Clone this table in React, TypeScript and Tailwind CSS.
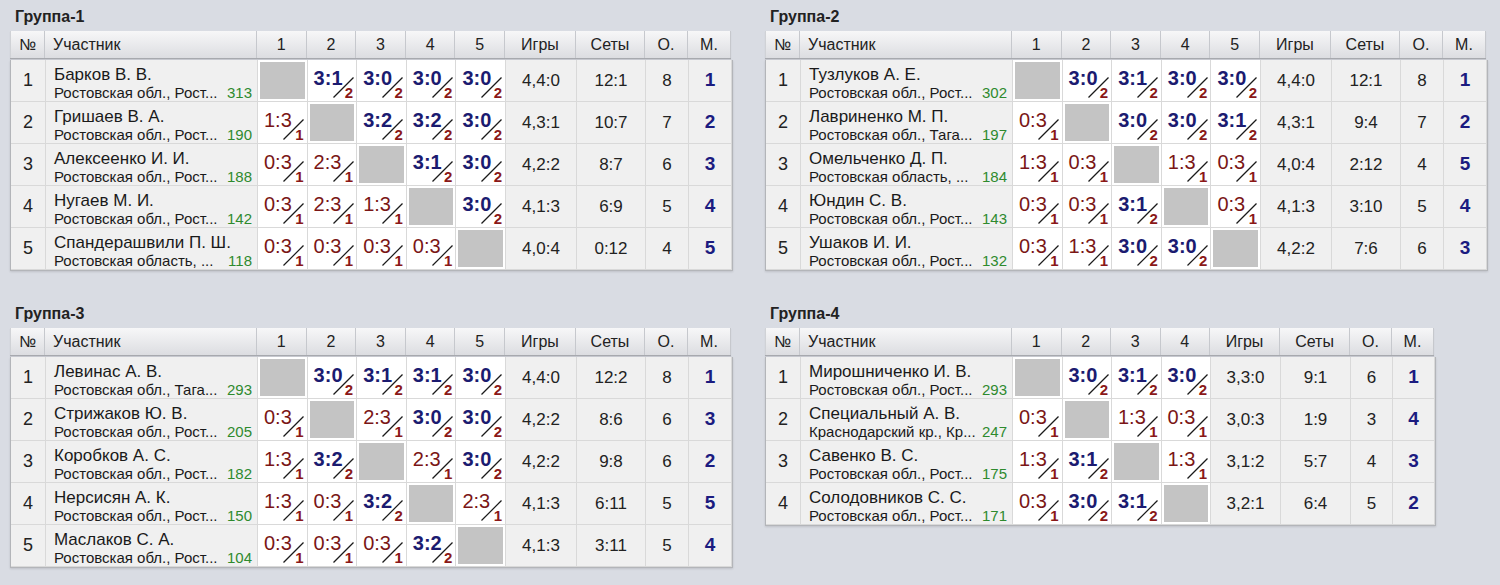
import React from "react";

type Row = {
  name: string;
  region: string;
  rating: number;
  scores: (string | null)[];
  games: string;
  sets: string;
  points: number;
  place: number;
};

type Group = {
  title: string;
  rows: Row[];
};

const groups: Group[] = [
  {
    title: "Группа-1",
    rows: [
      { name: "Барков В. В.", region: "Ростовская обл., Рост...", rating: 313, scores: [null, "3:1", "3:0", "3:0", "3:0"], games: "4,4:0", sets: "12:1", points: 8, place: 1 },
      { name: "Гришаев В. А.", region: "Ростовская обл., Рост...", rating: 190, scores: ["1:3", null, "3:2", "3:2", "3:0"], games: "4,3:1", sets: "10:7", points: 7, place: 2 },
      { name: "Алексеенко И. И.", region: "Ростовская обл., Рост...", rating: 188, scores: ["0:3", "2:3", null, "3:1", "3:0"], games: "4,2:2", sets: "8:7", points: 6, place: 3 },
      { name: "Нугаев М. И.", region: "Ростовская обл., Рост...", rating: 142, scores: ["0:3", "2:3", "1:3", null, "3:0"], games: "4,1:3", sets: "6:9", points: 5, place: 4 },
      { name: "Спандерашвили П. Ш.", region: "Ростовская область, ...", rating: 118, scores: ["0:3", "0:3", "0:3", "0:3", null], games: "4,0:4", sets: "0:12", points: 4, place: 5 },
    ],
  },
  {
    title: "Группа-2",
    rows: [
      { name: "Тузлуков А. Е.", region: "Ростовская обл., Рост...", rating: 302, scores: [null, "3:0", "3:1", "3:0", "3:0"], games: "4,4:0", sets: "12:1", points: 8, place: 1 },
      { name: "Лавриненко М. П.", region: "Ростовская обл., Тага...", rating: 197, scores: ["0:3", null, "3:0", "3:0", "3:1"], games: "4,3:1", sets: "9:4", points: 7, place: 2 },
      { name: "Омельченко Д. П.", region: "Ростовская область, ...", rating: 184, scores: ["1:3", "0:3", null, "1:3", "0:3"], games: "4,0:4", sets: "2:12", points: 4, place: 5 },
      { name: "Юндин С. В.", region: "Ростовская обл., Рост...", rating: 143, scores: ["0:3", "0:3", "3:1", null, "0:3"], games: "4,1:3", sets: "3:10", points: 5, place: 4 },
      { name: "Ушаков И. И.", region: "Ростовская обл., Рост...", rating: 132, scores: ["0:3", "1:3", "3:0", "3:0", null], games: "4,2:2", sets: "7:6", points: 6, place: 3 },
    ],
  },
  {
    title: "Группа-3",
    rows: [
      { name: "Левинас А. В.", region: "Ростовская обл., Тага...", rating: 293, scores: [null, "3:0", "3:1", "3:1", "3:0"], games: "4,4:0", sets: "12:2", points: 8, place: 1 },
      { name: "Стрижаков Ю. В.", region: "Ростовская обл., Рост...", rating: 205, scores: ["0:3", null, "2:3", "3:0", "3:0"], games: "4,2:2", sets: "8:6", points: 6, place: 3 },
      { name: "Коробков А. С.", region: "Ростовская обл., Рост...", rating: 182, scores: ["1:3", "3:2", null, "2:3", "3:0"], games: "4,2:2", sets: "9:8", points: 6, place: 2 },
      { name: "Нерсисян А. К.", region: "Ростовская обл., Рост...", rating: 150, scores: ["1:3", "0:3", "3:2", null, "2:3"], games: "4,1:3", sets: "6:11", points: 5, place: 5 },
      { name: "Маслаков С. А.", region: "Ростовская обл., Рост...", rating: 104, scores: ["0:3", "0:3", "0:3", "3:2", null], games: "4,1:3", sets: "3:11", points: 5, place: 4 },
    ],
  },
  {
    title: "Группа-4",
    rows: [
      { name: "Мирошниченко И. В.", region: "Ростовская обл., Рост...", rating: 293, scores: [null, "3:0", "3:1", "3:0"], games: "3,3:0", sets: "9:1", points: 6, place: 1 },
      { name: "Специальный А. В.", region: "Краснодарский кр., Кр...", rating: 247, scores: ["0:3", null, "1:3", "0:3"], games: "3,0:3", sets: "1:9", points: 3, place: 4 },
      { name: "Савенко В. С.", region: "Ростовская обл., Рост...", rating: 175, scores: ["1:3", "3:1", null, "1:3"], games: "3,1:2", sets: "5:7", points: 4, place: 3 },
      { name: "Солодовников С. С.", region: "Ростовская обл., Рост...", rating: 171, scores: ["0:3", "3:0", "3:1", null], games: "3,2:1", sets: "6:4", points: 5, place: 2 },
    ],
  },
];

const cols5 = "grid grid-cols-[35px_212px_repeat(5,49.6px)_71px_69px_43px_43px]";
const cols4 = "grid grid-cols-[35px_212px_repeat(4,49.5px)_70px_70px_42px_42px]";

const head =
  "h-[27px] flex items-center justify-center border-r border-[#c6c8cd] bg-gradient-to-b from-[#f7f7f8] to-[#dcdde1] text-[16px] text-[#222]";
const cell = "h-[42px] flex items-center justify-center border-r border-b border-[#d9d9d9]";

function ScoreCell({ score }: { score: string | null }) {
  if (!score) {
    return (
      <div className="h-[42px] bg-white p-[2px] border-r border-b border-[#d9d9d9]">
        <div className="h-full bg-[#c4c4c4]" />
      </div>
    );
  }
  const [a, b] = score.split(":").map(Number);
  const win = a > b;
  return (
    <div className="relative h-[42px] bg-white border-r border-b border-[#d9d9d9]">
      <span
        className={
          win
            ? "absolute left-[6px] top-[8px] text-[20px] leading-[20px] font-bold text-[#1b1b70]"
            : "absolute left-[6px] top-[8px] text-[20px] leading-[20px] text-[#7a1616]"
        }
      >
        {score}
      </span>
      <svg className="absolute left-[25px] top-[17px]" width="21" height="21" viewBox="0 0 21 21">
        <line x1="0.5" y1="20.5" x2="20.5" y2="0.5" stroke="#1a1a1a" strokeWidth="1.2" />
      </svg>
      <span className="absolute right-[3px] top-[25px] text-[15px] leading-[15px] font-bold text-[#8a1818]">
        {win ? 2 : 1}
      </span>
    </div>
  );
}

function GroupTable({ group }: { group: Group }) {
  const n = group.rows.length;
  const cols = n === 5 ? cols5 : cols4;
  return (
    <div>
      <div className="h-[31px] pl-[5px] pt-[8px] text-[16px] leading-[18px] font-bold text-[#222]">{group.title}</div>
      <div className={`${cols} w-fit border-b border-[#a7a9ae] shadow-[0_1px_1px_rgba(0,0,0,0.08)]`}>
        <div className={`${head} border-l border-l-[#d0d2d6]`}>№</div>
        <div className={`${head} justify-start pl-2`}>Участник</div>
        {group.rows.map((_, i) => (
          <div key={i} className={head}>
            {i + 1}
          </div>
        ))}
        <div className={head}>Игры</div>
        <div className={head}>Сеты</div>
        <div className={head}>О.</div>
        <div className={head}>М.</div>
      </div>
      <div className="border-l border-r border-b border-[#b3b5b9] mt-[1px] w-fit bg-[#f0f0f0] shadow-[0_1px_2px_rgba(0,0,0,0.12)]">
        {group.rows.map((r, i) => (
          <div key={i} className={cols}>
            <div className={`${cell} text-[18px] text-[#222]`}>{i + 1}</div>
            <div className="h-[42px] border-r border-b border-[#d9d9d9] pl-2 pr-[5px] pt-[5px]">
              <div className="text-[17px] leading-[19px] text-[#1a1a1a] whitespace-nowrap">{r.name}</div>
              <div className="flex justify-between items-baseline text-[15px] leading-[17px] whitespace-nowrap">
                <span className="text-[#1a1a1a]">{r.region}</span>
                <span className="text-[#2e8a2e]">{r.rating}</span>
              </div>
            </div>
            {r.scores.map((s, j) => (
              <ScoreCell key={j} score={s} />
            ))}
            <div className={`${cell} text-[17px] text-[#222]`}>{r.games}</div>
            <div className={`${cell} text-[17px] text-[#222]`}>{r.sets}</div>
            <div className={`${cell} text-[17px] text-[#222]`}>{r.points}</div>
            <div className={`${cell} text-[19px] font-bold text-[#1b1b80]`}>{r.place}</div>
          </div>
        ))}
      </div>
    </div>
  );
}

export default function App() {
  return (
    <div className="min-h-screen w-[1500px] h-[585px] bg-[#d9dce3] pl-[10px] font-['Liberation_Sans',Arial,sans-serif]">
      <div className="grid grid-cols-[755px_auto] gap-y-[26px]">
        {groups.map((g) => (
          <GroupTable key={g.title} group={g} />
        ))}
      </div>
    </div>
  );
}
